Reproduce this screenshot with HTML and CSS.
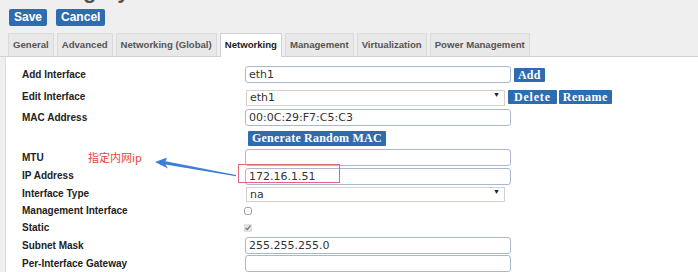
FILE: index.html
```html
<!DOCTYPE html>
<html lang="en">
<head>
    <meta charset="UTF-8">
    <title>Edit System</title>
    <link rel="stylesheet" href="styles.css">
</head>
<body>

<h1 class="title">Editing System</h1>

<div class="toolbar">
    <button class="btn-big">Save</button>
    <button class="btn-big">Cancel</button>
</div>

<ul class="tabs">
    <li>General</li>
    <li>Advanced</li>
    <li>Networking (Global)</li>
    <li class="active">Networking</li>
    <li>Management</li>
    <li>Virtualization</li>
    <li>Power Management</li>
</ul>

<div class="panel">
    <span class="note">指定内网ip</span>
    <svg class="arrow" width="90" height="25" viewBox="0 0 90 25">
        <polygon points="5,7 17,2.5 15.5,6.3 86,20 86,21.2 15.5,9.6 18,13.5" fill="#3d7fd6"/>
    </svg>

    <div class="row h23">
        <label>Add Interface</label>
        <input type="text" class="field" value="eth1">
        <button class="btn-small">Add</button>
    </div>
    <div class="row h21">
        <label>Edit Interface</label>
        <div class="select-wrap">
            <select class="pick"><option>eth1</option></select>
        </div>
        <button class="btn-small wide">Delete</button>
        <button class="btn-small wide tight">Rename</button>
    </div>
    <div class="row h21">
        <label>MAC Address</label>
        <input type="text" class="field" value="00:0C:29:F7:C5:C3">
    </div>
    <div class="row h20">
        <label></label>
        <button class="btn-small solo">Generate Random MAC</button>
    </div>
    <div class="row h18">
        <label>MTU</label>
        <input type="text" class="field">
    </div>
    <div class="row h18">
        <label>IP Address</label>
        <div class="marked">
            <input type="text" class="field" value="172.16.1.51">
            <span class="mark"></span>
        </div>
    </div>
    <div class="row h18">
        <label>Interface Type</label>
        <div class="select-wrap short">
            <select class="pick"><option>na</option></select>
        </div>
    </div>
    <div class="row h17">
        <label>Management Interface</label>
        <input type="checkbox" class="tick">
    </div>
    <div class="row h17">
        <label>Static</label>
        <input type="checkbox" class="tick" checked>
    </div>
    <div class="row h18">
        <label>Subnet Mask</label>
        <input type="text" class="field" value="255.255.255.0">
    </div>
    <div class="row h18">
        <label>Per-Interface Gateway</label>
        <input type="text" class="field">
    </div>
</div>

</body>
</html>
```

FILE: styles.css
```css
body {
    margin: 0;
    background: #efefef;
    font-family: "Liberation Sans", Arial, sans-serif;
    overflow: hidden;
}
.title {
    margin: -20px 0 0 22px;
    font-size: 22px;
    line-height: 22px;
    color: #555;
}
.toolbar {
    display: flex;
    gap: 9px;
    margin-top: 7px;
    padding-left: 9px;
}
.btn-big {
    height: 17px;
    padding: 0 5px;
    background: #2f6caf;
    color: white;
    border: none;
    border-radius: 2px;
    font-family: "Liberation Sans", Arial, sans-serif;
    font-weight: bold;
    font-size: 12px;
    line-height: 17px;
}
.tabs {
    display: flex;
    gap: 3px;
    margin: 7px 0 0 0;
    padding: 0 0 0 8px;
    list-style: none;
    border-bottom: 1px solid #d2d2d2;
}
.tabs li {
    height: 22px;
    padding: 0 4px;
    background: #e8e8e8;
    border: 1px solid #dadada;
    border-bottom: none;
    font-size: 9.6px;
    font-weight: bold;
    line-height: 22px;
    color: #555;
}
.tabs li.active {
    background: white;
    color: #222;
    border-color: #d2d2d2;
    margin-bottom: -1px;
    height: 23px;
}
.panel {
    position: relative;
    margin-left: 5px;
    padding: 6px 0 0 16px;
    height: 220px;
    background: white;
    border-left: 1px solid #dcdcdc;
}
.row {
    display: flex;
    align-items: center;
}
.h23 { height: 23px; }
.h21 { height: 21px; }
.h20 { height: 20px; }
.h18 { height: 18px; }
.h17 { height: 17px; }
.row label {
    width: 223px;
    flex: none;
    font-size: 10px;
    font-weight: bold;
    color: #222;
}
.field {
    box-sizing: border-box;
    width: 266px;
    height: 17px;
    margin: 0;
    padding: 0 3px;
    border: 1px solid #a9b8cf;
    border-radius: 3px;
    font-family: "DejaVu Sans", Verdana, sans-serif;
    font-size: 11px;
    color: #333;
    background: white;
}
.select-wrap {
    position: relative;
    margin-left: 1px;
}
.select-wrap::after {
    content: "\25BC";
    position: absolute;
    right: 5px;
    top: 4px;
    font-size: 7px;
    color: #222;
    pointer-events: none;
}
.pick {
    box-sizing: border-box;
    width: 259px;
    height: 16px;
    margin: 0;
    padding: 0 0 0 3px;
    border: 1px solid #d6d0c8;
    border-radius: 0;
    background: white;
    appearance: none;
    font-family: "DejaVu Sans", Verdana, sans-serif;
    font-size: 11px;
    color: #333;
}
.short .pick {
    height: 15px;
}
.btn-small {
    height: 14px;
    margin-left: 3px;
    padding: 0 4px;
    background: #2f6caf;
    color: white;
    border: none;
    border-radius: 1px;
    font-family: "Liberation Serif", "Times New Roman", serif;
    font-weight: bold;
    font-size: 12px;
    line-height: 14px;
    letter-spacing: 0.2px;
}
.btn-small.wide {
    padding: 0 6px;
    letter-spacing: 0.8px;
}
.btn-small.tight {
    margin-left: 2px;
    padding: 0 4px;
    letter-spacing: 0.5px;
}
.btn-small.solo {
    margin-left: 3px;
    height: 15px;
    padding: 0 4px;
    letter-spacing: 0.2px;
}
.marked {
    position: relative;
}
.mark {
    position: absolute;
    left: -7px;
    top: -2px;
    width: 100px;
    height: 17px;
    border: 1px solid #e0667a;
}
.tick {
    width: 8px;
    height: 8px;
    margin: 0 0 0 -1px;
    accent-color: #d8d8d8;
    opacity: 0.7;
}
.note {
    position: absolute;
    left: 82px;
    top: 94px;
    font-family: "Noto Sans CJK SC", sans-serif;
    font-size: 11px;
    line-height: 13px;
    color: #e8453c;
}
.arrow {
    position: absolute;
    left: 144px;
    top: 98px;
}
```
